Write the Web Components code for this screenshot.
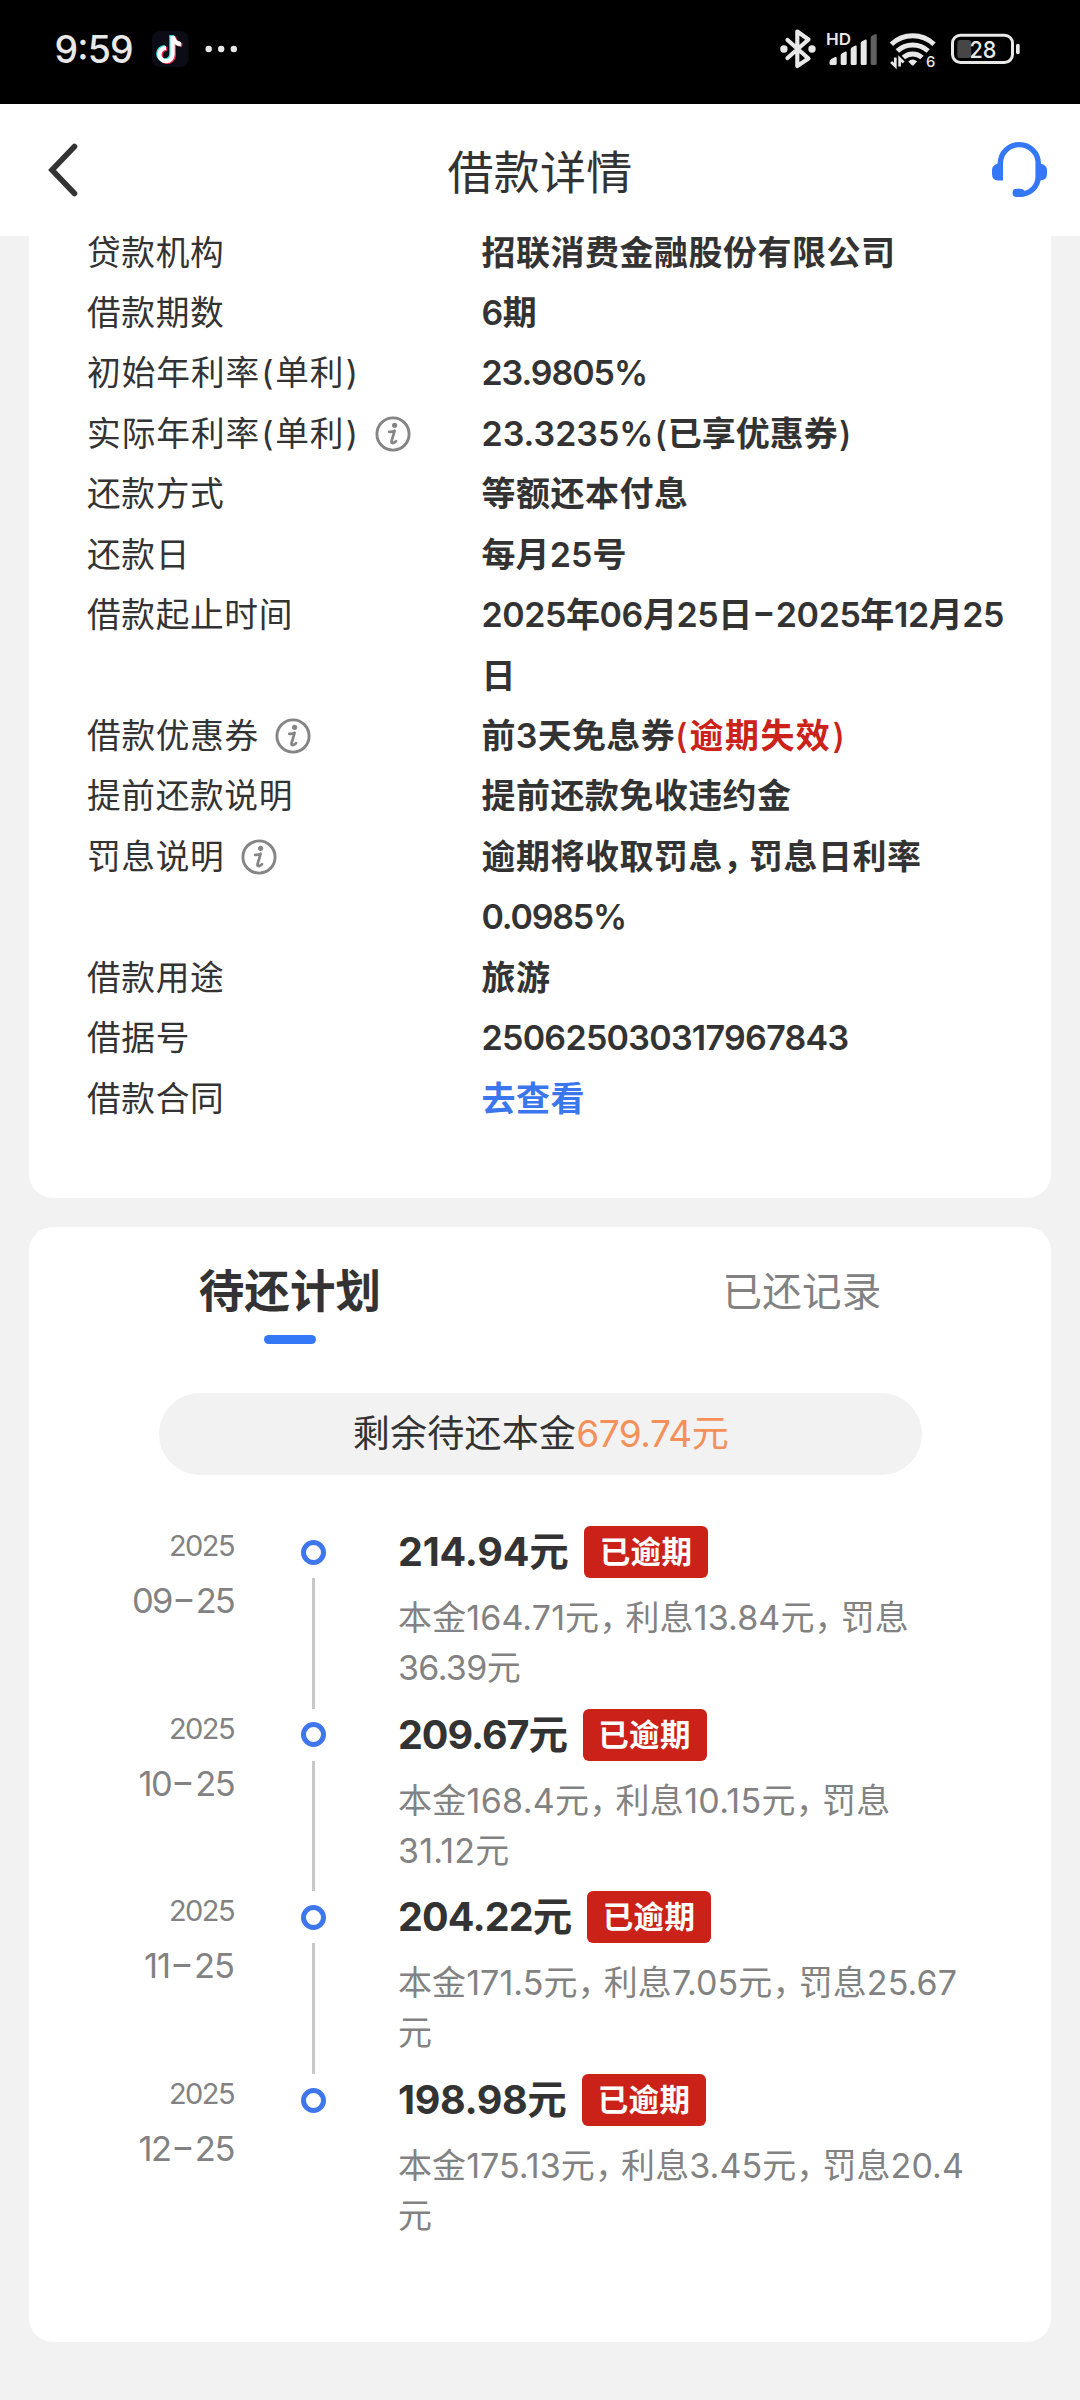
<!DOCTYPE html>
<html lang="zh-CN">
<head>
<meta charset="utf-8">
<title>借款详情</title>
<style>
html,body{margin:0;padding:0}
body{width:1080px;height:2400px;overflow:hidden;background:#f2f2f2;color:#333;font-family:Inter,"Noto Sans CJK SC",sans-serif}
</style>
</head>
<body>
<loan-page></loan-page>
<script>
const define = (name, html, setup) => customElements.define(name, class extends HTMLElement {
  connectedCallback() {
    if (this.shadowRoot) return;
    const root = this.attachShadow({mode: 'open'});
    root.innerHTML = typeof html === 'function' ? html(this) : html;
    if (setup) setup(this, root);
  }
});

define('loan-page', `
<style>
:host{display:flex;flex-direction:column;width:1080px;height:2400px}
main{display:flex;flex-direction:column;gap:29px;padding:0 29px}
</style>
<status-bar></status-bar>
<nav-bar><fit-text slot="title" w="185" text="借款详情"></fit-text></nav-bar>
<main><loan-info></loan-info><repay-plan></repay-plan></main>`);

define('status-bar', `
<style>
:host{display:block;height:104px;background:#000}
svg{display:block}
text{font-family:Inter,sans-serif;fill:#e8e8e8}
</style>
<svg width="1080" height="104" viewBox="0 0 1080 104">
  <text x="54.500" y="63" font-size="37.500" font-weight="500" textLength="79" lengthAdjust="spacing">9:59</text>
  <rect x="152" y="31" width="36.500" height="36" rx="8" fill="#0c0c16"/>
  <g fill="none" stroke-width="4.200">
    <g stroke="#35e8e6" transform="translate(-1.200 -.8)"><path d="M172.600 36V54.500a6.600 6.600 0 1 1-6.600-6.600"/><path d="M172.800 36c.6 5.200 3.600 7.800 8.200 8.200"/></g>
    <g stroke="#f4325c" transform="translate(1.200 .8)"><path d="M172.600 36V54.500a6.600 6.600 0 1 1-6.600-6.600"/><path d="M172.800 36c.6 5.200 3.600 7.800 8.200 8.200"/></g>
    <g stroke="#fff"><path d="M172.600 36V54.500a6.600 6.600 0 1 1-6.600-6.600"/><path d="M172.800 36c.6 5.200 3.600 7.800 8.200 8.200"/></g>
  </g>
  <g fill="#e8e8e8"><circle cx="208.700" cy="49" r="3.200"/><circle cx="221.200" cy="49" r="3.200"/><circle cx="233.800" cy="49" r="3.200"/></g>
  <path d="M787.500 40 808.500 58.500 797.300 66V31.500L808.500 39.500 787.500 58" fill="none" stroke="#e8e8e8" stroke-width="4.200" stroke-linejoin="round" stroke-linecap="round"/>
  <circle cx="783.900" cy="49" r="3.700" fill="#e8e8e8"/><circle cx="812" cy="49" r="3.700" fill="#e8e8e8"/>
  <text x="826" y="45" font-size="16.500" font-weight="600" textLength="25" lengthAdjust="spacingAndGlyphs">HD</text>
  <g fill="#e8e8e8">
    <path d="M829.500 62q0-2 1.700-2.900l3.800-2q1.700-.7 1.700 1V63.500q0 1.500-1.500 1.500h-4.200q-1.500 0-1.500-1.500z"/>
    <path d="M840.700 55.500q0-1.500 1.300-2.200l3-1.500q1.700-.7 1.700 1V63.500q0 1.500-1.500 1.500h-3q-1.500 0-1.500-1.500z"/>
    <path d="M850.700 49.500q0-1.500 1.300-2.200l3-1.500q1.700-.7 1.700 1V63.500q0 1.500-1.500 1.500h-3q-1.500 0-1.500-1.500z"/>
    <path d="M860.700 43.500q0-1.500 1.300-2.200l3-1.500q1.700-.7 1.700 1V63.500q0 1.500-1.500 1.500h-3q-1.500 0-1.500-1.500z"/>
    <path fill="#606060" d="M870.700 38q0-1.500 1.300-2.200l3-1.500q1.700-.7 1.700 1V63.500q0 1.500-1.500 1.500h-3q-1.500 0-1.500-1.500z"/>
  </g>
  <g fill="none" stroke="#e8e8e8" stroke-width="5">
    <path d="M891.400 44.300a31 31 0 0 1 42.600 0"/><path d="M897.300 51a22.500 22.500 0 0 1 30.800 0"/><path d="M903.400 57.500a13.800 13.800 0 0 1 18.600 0"/>
  </g>
  <path d="M908.300 61.500q4.400-4.200 8.800 0l-3.300 3.600q-1.100 1-2.200 0z" fill="#e8e8e8"/>
  <path d="M895.300 57.500V66l-4.200-4M899.600 66.500V58.500l4 4" fill="none" stroke="#e8e8e8" stroke-width="2.700"/>
  <text x="926" y="67.300" font-size="14.800" font-weight="500">6</text>
  <rect x="952.500" y="35.200" width="60" height="27.300" rx="8" fill="none" stroke="#e8e8e8" stroke-width="3"/>
  <rect x="957.300" y="40" width="14" height="18" rx="3" fill="#464646"/>
  <rect x="1016" y="43.700" width="3.700" height="10.600" rx="1.800" fill="#e8e8e8"/>
  <text x="969.500" y="58" font-size="23.500" font-weight="500" textLength="27" lengthAdjust="spacingAndGlyphs">28</text>
</svg>`);

define('nav-bar', `
<style>
:host{display:grid;grid-template-columns:200px 1fr 200px;align-items:center;height:132px;background:#fff;font-size:46px;line-height:60px}
.title{display:flex;justify-content:center;padding-top:3px}
.back{margin-left:44px}.help{justify-self:end;margin-right:31px}
svg{display:block}
</style>
<svg class="back" width="40" height="60" viewBox="0 0 40 60"><path d="M30.500 6.500 8 30 30.500 53.500" fill="none" stroke="#333" stroke-width="5.600" stroke-linecap="round"/></svg>
<div class="title"><slot name="title"></slot></div>
<svg class="help" width="60" height="60" viewBox="0 0 60 60">
  <path d="M11.300 40V23.600A19 19 0 0 1 49.300 23.600V36C49.300 47 41 54.400 30 54.400" fill="none" stroke="#3478f8" stroke-width="5.400"/>
  <path d="M14 23V40.500H9Q3 40 3 34V30Q3 25 9 23.500zM46.700 23V40.500H51Q58 40 58 34V30Q58 25 51.500 23.500z" fill="#3478f8"/>
  <rect x="23.500" y="48.800" width="12" height="8.200" rx="4.100" fill="#3478f8"/>
</svg>`);

const CARD = ':host{display:flex;flex-direction:column;background:#fff;box-sizing:border-box;overflow:hidden}';

define('loan-info', `
<style>
${CARD}
:host{height:961.500px;border-radius:0 0 24px 24px}
.rows{display:flex;flex-direction:column;margin:-13.500px 0 0 58px}
.red{color:#cb2219}.link{color:#3a76ee}
</style>
<div class="rows">
<info-row label="贷款机构" lw="137.500"><fit-text w="414" text="招联消费金融股份有限公司"></fit-text></info-row>
<info-row label="借款期数" lw="137.500"><fit-text w="55" text="6期"></fit-text></info-row>
<info-row label="初始年利率(单利)" lw="272"><fit-text w="165.500" text="23.9805%"></fit-text></info-row>
<info-row label="实际年利率(单利)" lw="272" tip><fit-text w="370" text="23.3235%(已享优惠券)"></fit-text></info-row>
<info-row label="还款方式" lw="137.500"><fit-text w="207" text="等额还本付息"></fit-text></info-row>
<info-row label="还款日" lw="103"><fit-text w="145" text="每月25号"></fit-text></info-row>
<info-row label="借款起止时间" lw="206" lines="2"><fit-text w="522.500" text="2025年06月25日-2025年12月25"></fit-text><fit-text w="34.500" text="日"></fit-text></info-row>
<info-row label="借款优惠券" lw="172" tip><div><fit-text w="193.500" text="前3天免息券"></fit-text><fit-text class="red" w="171.500" text="(逾期失效)"></fit-text></div></info-row>
<info-row label="提前还款说明" lw="206"><fit-text w="310" text="提前还款免收违约金"></fit-text></info-row>
<info-row label="罚息说明" lw="137.500" tip lines="2"><fit-text w="440" text="逾期将收取罚息，罚息日利率"></fit-text><fit-text w="144.500" text="0.0985%"></fit-text></info-row>
<info-row label="借款用途" lw="137.500"><fit-text w="69" text="旅游"></fit-text></info-row>
<info-row label="借据号" lw="103"><fit-text w="367" text="250625030317967843"></fit-text></info-row>
<info-row label="借款合同" lw="137.500"><fit-text class="link" w="103.500" text="去查看"></fit-text></info-row>
</div>`);

define('info-row', el => `
<style>
:host{display:grid;grid-template-columns:394.500px 1fr;height:${60.45 * (el.getAttribute('lines') || 1)}px;line-height:60.450px;font-size:34px}
.label{display:flex;align-items:center;gap:16px;height:60.450px;font-size:33.700px}
.value{display:flex;flex-direction:column;align-items:flex-start;font-weight:600}
::slotted(*){height:60.450px}
::slotted(div){display:flex}
svg{display:block}
</style>
<div class="label"><fit-text w="${el.getAttribute('lw')}" text="${el.getAttribute('label')}"></fit-text>${el.hasAttribute('tip') ? `
<svg width="36" height="36" viewBox="0 0 36 36"><circle cx="18" cy="18" r="16.100" fill="none" stroke="#858585" stroke-width="2.900"/><circle cx="19.600" cy="9.300" r="2.600" fill="#858585"/><path d="M14.300 15.800q3.600.3 5.300-1l-3 10.200q-.8 3 2.800 1.600l1.600-1.400" fill="none" stroke="#858585" stroke-width="2.700" stroke-linecap="round" stroke-linejoin="round"/></svg>` : ''}</div>
<div class="value"><slot></slot></div>`);

define('repay-plan', `
<style>
${CARD}
:host{height:1115px;border-radius:24px}
nav{display:grid;grid-template-columns:512px 512px;margin-left:5px;padding-top:32px;height:86px;line-height:66px;flex:none}
.tab{display:flex;flex-direction:column;align-items:center;font-size:39.500px;color:#828282}
.tab.on{font-size:45.500px;font-weight:700;color:#333}
.bar{width:52px;height:9px;border-radius:4.500px;background:#3478f8;margin-top:10.500px}
.total{display:flex;justify-content:center;align-items:center;width:763px;height:82px;margin:48px 0 0 130px;border-radius:41px;background:#f2f2f2;font-size:37px;line-height:50px;box-sizing:border-box;padding-top:1px}
.sum{color:#f5905a}
.list{display:flex;flex-direction:column;margin-top:51.500px}
</style>
<nav>
  <div class="tab on"><fit-text w="182.500" text="待还计划"></fit-text><div class="bar"></div></div>
  <div class="tab"><fit-text w="159" text="已还记录"></fit-text></div>
</nav>
<div class="total"><fit-text w="223.500" text="剩余待还本金"></fit-text><fit-text class="sum" w="152" text="679.74元"></fit-text></div>
<div class="list">
<plan-item day="09-25" dw="102" sum="214.94元" sw="170.500"><fit-text w="511" text="本金164.71元，利息13.84元，罚息"></fit-text><fit-text w="122" text="36.39元"></fit-text></plan-item>
<plan-item day="10-25" dw="95.500" sum="209.67元" sw="169"><fit-text w="492.500" text="本金168.4元，利息10.15元，罚息"></fit-text><fit-text w="111.500" text="31.12元"></fit-text></plan-item>
<plan-item day="11-25" dw="90" sum="204.22元" sw="173.500"><fit-text w="559" text="本金171.5元，利息7.05元，罚息25.67"></fit-text><fit-text w="34.500" text="元"></fit-text></plan-item>
<plan-item day="12-25" dw="95.500" sum="198.98元" sw="168.500" last><fit-text w="566" text="本金175.13元，利息3.45元，罚息20.4"></fit-text><fit-text w="34.500" text="元"></fit-text></plan-item>
</div>`);

define('plan-item', el => `
<style>
:host{display:grid;grid-template-columns:206px 157.500px 1fr;height:182.700px;color:#828282}
.date{display:flex;flex-direction:column;align-items:flex-end;line-height:72px;font-size:34.500px;padding-right:1px;box-sizing:border-box}
.year{font-size:29px;line-height:39px}
.axis{display:flex;flex-direction:column;align-items:center}
.dot{width:25px;height:25px;box-sizing:border-box;border:5.500px solid #3f76ec;border-radius:50%;margin:13.500px 0}
.line{flex:1;width:3px;background:#c8c8c8}
.body{display:flex;flex-direction:column;padding-left:5.500px;font-size:34px;line-height:50px}
.head{display:flex;align-items:center;gap:15.500px;height:52px;margin-bottom:15px;color:#333;font-size:39.500px;font-weight:700}
.badge{display:flex;justify-content:center;width:124px;height:52px;line-height:52px;border-radius:6px;background:#ca2118;color:#fff;font-size:30.500px}
</style>
<div class="date"><fit-text class="year" w="65" text="2025"></fit-text><fit-text w="${el.getAttribute('dw')}" text="${el.getAttribute('day')}"></fit-text></div>
<div class="axis"><div class="dot"></div>${el.hasAttribute('last') ? '' : '<div class="line"></div>'}</div>
<div class="body"><div class="head"><fit-text w="${el.getAttribute('sw')}" text="${el.getAttribute('sum')}"></fit-text><div class="badge"><fit-text w="92.500" text="已逾期"></fit-text></div></div><slot></slot></div>`);

// One line of text, tracked so that its advance width equals the "w" attribute.
// The full-width comma is set tight, brackets get air, and the dash is drawn wide.
define('fit-text', el => `
<style>
:host{display:block;white-space:nowrap}
.run{display:inline-block;vertical-align:top}
.comma{letter-spacing:-.23em}
.open,.close{font-weight:400}
.open{margin:0 .02em 0 .03em}
.close{margin-left:.04em}
.dash{display:inline-block;line-height:1;transform:scale(1.500,1.100);margin:0 .12em;letter-spacing:0;font-feature-settings:"case"}
:host(.red) .open{margin-left:0}
:host(.bold) .open,:host(.bold) .close{font-weight:500}
</style><span class="run">${el.getAttribute('text')
  .replace(/[，()-]/g, c => `<span class="${{'，': 'comma', '(': 'open', ')': 'close', '-': 'dash'}[c]}">${c}</span>`)}</span>`, (el, root) => {
  if (getComputedStyle(el).fontWeight >= 600) el.classList.add('bold');
  const run = root.querySelector('.run');
  const tracked = run.textContent.replace(/[，-]/g, '').length;
  const gap = (+el.getAttribute('w') - run.getBoundingClientRect().width) / tracked;
  run.style.letterSpacing = gap.toFixed(3) + 'px';
});
</script>
</body>
</html>
